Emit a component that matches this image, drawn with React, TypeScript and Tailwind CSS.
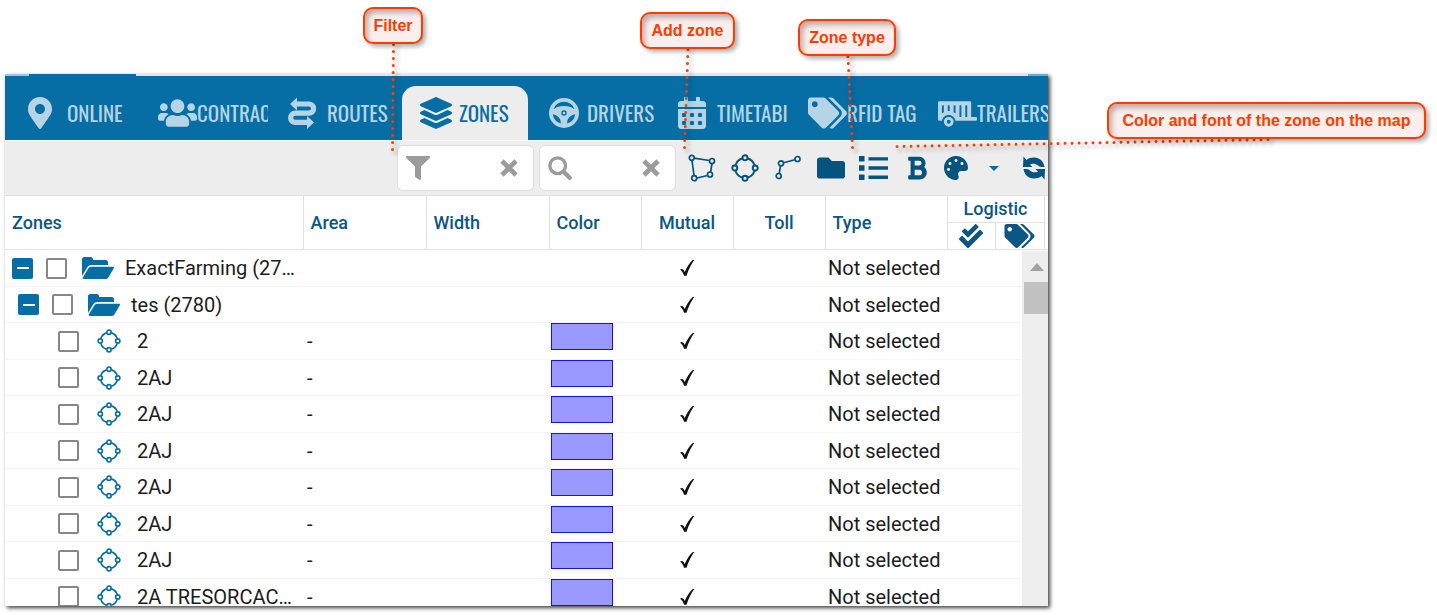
import type { ComponentType, ReactNode } from "react";
import {
  FaBold,
  FaCalendarAlt,
  FaCheckDouble,
  FaFilter,
  FaFolder,
  FaLayerGroup,
  FaMapMarkerAlt,
  FaPalette,
  FaTags,
  FaTrailer,
  FaUsers,
} from "react-icons/fa";

type IconProps = { className?: string };

function RouteIcon({ className }: IconProps) {
  return (
    <svg viewBox="0 0 28 32" className={className} fill="none" aria-hidden="true">
      <path
        d="M8 7h13a4.600 4.600 0 0 1 0 9.200H7.200a4.600 4.600 0 0 0 0 9.200H19"
        stroke="currentColor"
        strokeWidth="5.200"
      />
      <path d="M2 7 9 .500v13zM26 25.400 19 19v13z" fill="currentColor" />
    </svg>
  );
}

function WheelIcon({ className }: IconProps) {
  return (
    <svg viewBox="0 0 32 32" className={className} aria-hidden="true">
      <path
        fill="currentColor"
        fillRule="evenodd"
        d="M16 1a15 15 0 1 1 0 30 15 15 0 0 1 0-30ZM5.500 12.200c3-2.200 6.200-3.200 10.500-3.200s7.500 1 10.500 3.200A11.300 11.300 0 0 0 16 4.800 11.300 11.300 0 0 0 5.500 12.200ZM4.800 17.300a11.300 11.300 0 0 0 8 9.300c.3-4.600-2.300-8-8-9.300ZM27.200 17.300a11.300 11.300 0 0 1-8 9.300c-.3-4.600 2.300-8 8-9.300Z"
      />
      <circle cx="16" cy="16" r="2" fill="none" stroke="#066ea5" strokeWidth="1.400" />
    </svg>
  );
}

function CrossIcon({ className }: IconProps) {
  return (
    <svg viewBox="0 0 20 20" className={className} aria-hidden="true">
      <path d="m3 3 14 14M17 3 3 17" stroke="currentColor" strokeWidth="4.600" />
    </svg>
  );
}

function SearchIcon({ className }: IconProps) {
  return (
    <svg viewBox="0 0 26 26" className={className} fill="none" stroke="currentColor" aria-hidden="true">
      <circle cx="10.500" cy="10.500" r="8.500" strokeWidth="3.600" />
      <path d="m17.500 17.500 6 6" strokeWidth="4.600" strokeLinecap="round" />
    </svg>
  );
}

function OpenFolderIcon({ className }: IconProps) {
  return (
    <svg viewBox="0 0 32 22" className={className} fill="currentColor" aria-hidden="true">
      <path d="M0 19V2.200C0 1 .9 0 2.200 0h6.600C10 0 11 1 11 2.200V3h12.800C25 3 26 4 26 5.200V8H9.500C7.800 8 6.300 8.800 5.400 10.200z" />
      <path d="M9.300 9.800H31c.8 0 1.200.8.8 1.500l-5.300 9c-.6 1-1.500 1.700-2.700 1.700H1.600c-.8 0-1.200-.8-.8-1.500l5.500-9c.6-1 1.700-1.700 3-1.700z" />
    </svg>
  );
}

function ListIcon({ className }: IconProps) {
  return (
    <svg viewBox="0 0 30 24" className={className} fill="currentColor" aria-hidden="true">
      <path d="M0 0h5.500v5.500H0zM0 9.200h5.500v5.500H0zM0 18.500h5.500V24H0z" />
      <path d="M9.500 1.200H29v3.400H9.500zM9.500 10.300H29v3.400H9.500zM9.500 19.500H29v3.400H9.500z" />
    </svg>
  );
}

function PolygonZoneIcon({ className }: IconProps) {
  return (
    <svg viewBox="0 0 28 28" className={className} fill="none" stroke="currentColor" strokeWidth="1.700" aria-hidden="true">
      <path d="M6 4.200 21.500 6.500M24 9.500 22.500 18.500M19.500 21.500 9 24M6 21.500 4 6.500" />
      <circle cx="3.800" cy="3.800" r="2.500" />
      <circle cx="24" cy="7" r="2.500" />
      <circle cx="22" cy="20.500" r="2.500" />
      <circle cx="6.200" cy="24.200" r="2.500" />
    </svg>
  );
}

function CircleZoneIcon({ className }: IconProps) {
  return (
    <svg viewBox="0 0 28 28" className={className} fill="none" stroke="currentColor" strokeWidth="1.900" aria-hidden="true">
      <path d="M16.800 4.500a10 10 0 0 1 6.700 6.700M23.500 16.800a10 10 0 0 1-6.700 6.700M11.200 23.500a10 10 0 0 1-6.700-6.700M4.500 11.200a10 10 0 0 1 6.700-6.700" />
      <circle cx="14" cy="3.800" r="2.500" />
      <circle cx="24.200" cy="14" r="2.500" />
      <circle cx="14" cy="24.200" r="2.500" />
      <circle cx="3.800" cy="14" r="2.500" />
    </svg>
  );
}

function LineZoneIcon({ className }: IconProps) {
  return (
    <svg viewBox="0 0 28 28" className={className} fill="none" stroke="currentColor" strokeWidth="1.700" aria-hidden="true">
      <path d="M5.200 19.500 6.500 11.800M9.500 8.700 21 5.700" />
      <circle cx="4.700" cy="22" r="2.500" />
      <circle cx="7" cy="9.300" r="2.500" />
      <circle cx="23.500" cy="5" r="2.500" />
    </svg>
  );
}

function RefreshIcon({ className }: IconProps) {
  return (
    <svg viewBox="0 0 24 24" className={className} fill="currentColor" aria-hidden="true">
      <path d="M1.500.500 1 11h9.500L8 8.500c2.300-1.500 5.700-1 8 1 1.500 1.300 3 1.600 6.500 1.500C21.500 5 17.500 1.500 12.300 1.500 9 1.500 6.500 2.200 4.500 4z" />
      <path d="M22.500 23.500 23 13h-9.500l2.500 2.500c-2.300 1.500-5.700 1-8-1-1.500-1.300-3-1.600-6.500-1.500 1 6 5 9.500 10.200 9.500 3.300 0 5.800-.7 7.800-2.500z" />
    </svg>
  );
}

function CheckMark() {
  return (
    <svg viewBox="0 0 16 18" className="mx-auto block h-[18px] w-4" role="img" aria-label="yes">
      <path d="M1 10.800c1.100-1.100 2.600-1.200 3.400 0l1.300 2.200C7.700 8.500 10.200 4.200 13.800 1h1.500C11.900 5.700 9.600 10.600 7.500 16.800H5c-.8-2.700-1.900-4.800-4-6z" fill="#111" />
    </svg>
  );
}

const tabs: { label: string; Icon: ComponentType<IconProps>; size: string; active?: boolean }[] = [
  { label: "ONLINE", Icon: FaMapMarkerAlt, size: "h-8 w-6" },
  { label: "CONTRAC", Icon: FaUsers, size: "h-10 w-[39px]" },
  { label: "ROUTES", Icon: RouteIcon, size: "h-8 w-7" },
  { label: "ZONES", Icon: FaLayerGroup, size: "h-8 w-8", active: true },
  { label: "DRIVERS", Icon: WheelIcon, size: "h-8 w-8" },
  { label: "TIMETABI", Icon: FaCalendarAlt, size: "h-8 w-7" },
  { label: "RFID TAG", Icon: FaTags, size: "h-10 w-[39px]" },
  { label: "TRAILERS", Icon: FaTrailer, size: "h-10 w-[39px]" },
];

function TabBar() {
  return (
    <nav className="bg-[#066ea5]">
      <div className="flex h-0.5 bg-[#e4e4e4]">
        <span className="w-6 bg-[#a5c6d8]" />
        <span className="w-[107px] bg-[#066ea5]" />
        <span className="ml-auto w-5 bg-[#75abc9]" />
      </div>
      <div className="flex gap-1 overflow-hidden pl-[7px] pt-[10px]">
        {tabs.map(({ label, Icon, size, active }) => (
          <button
            key={label}
            type="button"
            className={`flex h-[54px] w-[126px] shrink-0 items-center overflow-hidden rounded-t-[14px] ${
              active ? "bg-[#ededed] pl-[18px] text-[#066ea5]" : "pl-4 text-[#b5d5e6]"
            }`}
          >
            <span className="w-[39px] shrink-0">
              <Icon className={size} />
            </span>
            <span className="whitespace-nowrap font-['Oswald','Liberation_Sans_Narrow','Roboto_Condensed',sans-serif] text-[21px]">
              {label}
            </span>
          </button>
        ))}
      </div>
    </nav>
  );
}

function SearchBox({ label, icon }: { label: string; icon: ReactNode }) {
  return (
    <div className="flex h-[46px] w-[137px] items-center rounded-md border border-[#dedede] bg-white pl-2 pr-[14px] text-[#9b9b9b]">
      {icon}
      <input type="text" aria-label={label} className="min-w-0 flex-1 px-1 text-base text-black outline-none" />
      <button type="button" aria-label={`Clear ${label}`}>
        <CrossIcon className="h-5 w-5" />
      </button>
    </div>
  );
}

const tools: { label: string; Icon: ComponentType<IconProps>; size: string }[] = [
  { label: "Add polygon", Icon: PolygonZoneIcon, size: "h-7 w-7" },
  { label: "Add circle", Icon: CircleZoneIcon, size: "h-7 w-7" },
  { label: "Add line", Icon: LineZoneIcon, size: "h-7 w-7" },
  { label: "Add folder", Icon: FaFolder, size: "h-7 w-7" },
  { label: "Zone type", Icon: ListIcon, size: "h-6 w-[30px]" },
  { label: "Font", Icon: FaBold, size: "h-[26px] w-[26px]" },
];

function Toolbar() {
  return (
    <div className="flex h-[55px] items-center justify-end overflow-hidden border-t border-[#f8f8f8] bg-[#ededed] text-[#05537f]">
      <div className="flex gap-[5px]">
        <SearchBox label="filter" icon={<FaFilter className="h-6 w-6 shrink-0" />} />
        <SearchBox label="search" icon={<SearchIcon className="h-6 w-6 shrink-0" />} />
      </div>
      <div className="flex items-center pl-1">
        {tools.map(({ label, Icon, size }) => (
          <button key={label} type="button" aria-label={label} className="flex w-[43px] justify-center">
            <Icon className={size} />
          </button>
        ))}
        <button type="button" aria-label="Color" className="ml-[6px]">
          <FaPalette className="h-6 w-6" />
        </button>
        <button type="button" aria-label="More colors" className="flex w-[52px] justify-center">
          <svg viewBox="0 0 10 5" className="h-[5px] w-[10px]" aria-hidden="true">
            <path d="M0 0h10L5 5z" fill="#066ea5" />
          </svg>
        </button>
        <button type="button" aria-label="Refresh" className="flex w-7 justify-center">
          <RefreshIcon className="h-6 w-6" />
        </button>
      </div>
    </div>
  );
}

type Zone = { name: string; kind: "group" | "subgroup" | "zone" };

const zones: Zone[] = [
  { name: "ExactFarming (27…", kind: "group" },
  { name: "tes (2780)", kind: "subgroup" },
  { name: "2", kind: "zone" },
  { name: "2AJ", kind: "zone" },
  { name: "2AJ", kind: "zone" },
  { name: "2AJ", kind: "zone" },
  { name: "2AJ", kind: "zone" },
  { name: "2AJ", kind: "zone" },
  { name: "2AJ", kind: "zone" },
  { name: "2A TRESORCAC…", kind: "zone" },
];

const indent = { group: "pl-[7px]", subgroup: "pl-[13px]", zone: "pl-[53px]" };

function ZoneRow({ zone }: { zone: Zone }) {
  const isZone = zone.kind === "zone";

  return (
    <tr className="h-[37px] border-b border-[#f5f5f5] even:h-9">
      <td className="p-0">
        <div className={`flex items-center ${indent[zone.kind]}`}>
          {!isZone && (
            <button
              type="button"
              aria-label={`Collapse ${zone.name}`}
              className="mr-[13px] flex h-[21px] w-[21px] items-center justify-center rounded-xs bg-[#066ea5]"
            >
              <span className="h-0.5 w-3 bg-white" />
            </button>
          )}
          <input
            type="checkbox"
            aria-label={`Select ${zone.name}`}
            className="h-[21px] w-[21px] appearance-none rounded-xs border-2 border-[#868686] bg-white"
          />
          {isZone ? (
            <CircleZoneIcon className="ml-[18px] mr-4 h-6 w-6 text-[#066ea5]" />
          ) : (
            <OpenFolderIcon className="ml-[15px] mr-[11px] h-[22px] w-8 text-[#066ea5]" />
          )}
          <span className="whitespace-nowrap">{zone.name}</span>
        </div>
      </td>
      <td className="p-0 pl-1">{isZone && "-"}</td>
      <td className="p-0" />
      <td className="p-0 pl-[2px] align-top">
        {isZone && <div className="h-[27px] w-[62px] border border-[#1010ff] bg-[#9999ff]" />}
      </td>
      <td className="p-0">
        <CheckMark />
      </td>
      <td className="p-0" />
      <td className="whitespace-nowrap p-0 pl-[3px]">Not selected</td>
      <td className="p-0" colSpan={3} />
    </tr>
  );
}

function ZoneTable() {
  const th = "border-r border-[#e0e0e0] p-0 px-[7px] font-medium";

  return (
    <div className="relative min-h-0 flex-1 overflow-hidden">
      <table className="w-full table-fixed border-collapse font-[Roboto,sans-serif] text-xl leading-6 text-[#1c1c1c]">
        <colgroup>
          <col />
          <col className="w-[123px]" />
          <col className="w-[123px]" />
          <col className="w-[92px]" />
          <col className="w-[92px]" />
          <col className="w-[92px]" />
          <col className="w-[122px]" />
          <col className="w-12" />
          <col className="w-[49px]" />
          <col className="w-1" />
        </colgroup>
        <thead className="text-left text-lg leading-6 text-[#0b5685]">
          <tr className="h-[27px] border-t border-[#e0e0e0]">
            <th rowSpan={2} className={th}>Zones</th>
            <th rowSpan={2} className={th}>Area</th>
            <th rowSpan={2} className={th}>Width</th>
            <th rowSpan={2} className={th}>Color</th>
            <th rowSpan={2} className={`${th} text-center`}>Mutual</th>
            <th rowSpan={2} className={`${th} text-center`}>Toll</th>
            <th rowSpan={2} className={th}>Type</th>
            <th colSpan={2} className={`${th} border-b text-center`}>Logistic</th>
            <th rowSpan={2} className="p-0" aria-label="Scroll gutter" />
          </tr>
          <tr className="h-[27px] border-b border-[#e0e0e0]">
            <th className="border-r border-[#e0e0e0] p-0" aria-label="Confirmed">
              <FaCheckDouble className="mx-auto h-6 w-6" />
            </th>
            <th className="border-r border-[#e0e0e0] p-0" aria-label="Tags">
              <FaTags className="mx-auto h-6 w-[31px]" />
            </th>
          </tr>
        </thead>
        <tbody>
          {zones.map((zone, i) => (
            <ZoneRow key={i} zone={zone} />
          ))}
        </tbody>
      </table>

      {/* scrollbar lies over the rows, the header runs past it */}
      <div className="absolute bottom-0 right-0 top-14 w-[26px] bg-[#eeeeee]">
        <svg viewBox="0 0 14 8" className="ml-[8px] mt-3 h-2 w-[14px]" aria-hidden="true">
          <path d="M0 8h14L7 0z" fill="#a3a3a3" />
        </svg>
        <div className="ml-0.5 mt-[11px] h-8 bg-[#c1c1c1]" />
      </div>
    </div>
  );
}

const callouts = [
  { text: "Filter", place: "left-[363px] top-[7px] w-[60px]" },
  { text: "Add zone", place: "left-[640px] top-[12px] w-[95px]" },
  { text: "Zone type", place: "left-[798px] top-[19px] w-[98px]" },
  { text: "Color and font of the zone on the map", place: "left-[1107px] top-[102px] w-[319px]" },
];

function Callouts() {
  return (
    <>
      <svg
        className="pointer-events-none absolute left-0 top-0 h-[615px] w-[1437px] drop-shadow-[3px_3px_2px_rgba(0,0,0,0.4)]"
        viewBox="0 0 1437 615"
        fill="none"
        stroke="#ff3b00"
        strokeWidth="3"
        strokeLinecap="round"
        strokeDasharray="0 7"
        aria-hidden="true"
      >
        <path d="M393.500 44.500 392.500 150" />
        <path d="M688 49.500 684.500 148" />
        <path d="M848 56.500 852.500 148" />
        <path d="M1268 139.500 895 146.500" />
      </svg>
      {callouts.map(({ text, place }) => (
        <div
          key={text}
          className={`absolute whitespace-nowrap rounded-[10px] border-2 border-[#ff3b00] bg-[#faefed] py-[6px] text-center font-['Liberation_Sans',Arial,sans-serif] text-base leading-[21px] font-bold text-[#ff3b00] shadow-[inset_3px_4px_5px_rgba(90,50,50,0.35),3px_3px_4px_rgba(0,0,0,0.3)] ${place}`}
        >
          {text}
        </div>
      ))}
    </>
  );
}

export default function App() {
  return (
    <div className="relative h-screen overflow-hidden bg-white pb-[9px] pl-[5px] pr-[389px] pt-[74px]">
      <main className="flex h-full flex-col overflow-hidden bg-white shadow-[2px_2px_4px_rgba(0,0,0,0.75)]">
        <TabBar />
        <Toolbar />
        <ZoneTable />
      </main>
      <Callouts />
    </div>
  );
}
